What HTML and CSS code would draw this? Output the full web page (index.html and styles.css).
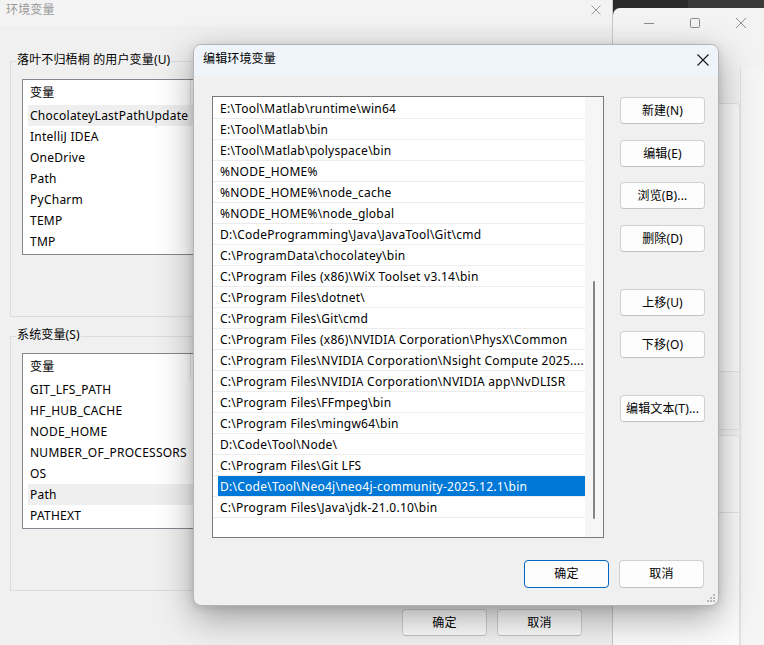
FILE: index.html
```html
<!DOCTYPE html>
<html lang="zh-CN">
<head>
<meta charset="utf-8">
<title>编辑环境变量</title>
<link rel="stylesheet" href="styles.css">
</head>
<body>
<div class="win-far">
  <div class="far-title">
    <div class="ctl"><svg width="12" height="12" viewBox="0 0 12 12"><path d="M1 6.5h10" stroke="#8a8a8a" stroke-width="1"/></svg></div>
    <div class="ctl"><svg width="12" height="12" viewBox="0 0 12 12"><rect x="1.5" y="1.5" width="9" height="9" rx="1" fill="none" stroke="#8a8a8a" stroke-width="1"/></svg></div>
    <div class="ctl"><svg width="12" height="12" viewBox="0 0 12 12"><path d="M1 1l10 10M11 1L1 11" stroke="#8a8a8a" stroke-width="1"/></svg></div>
  </div>
  <div class="far-body">
    <div class="far-cards">
      <div class="card card-a"><div class="card-sec card-sec-a1"></div><div class="card-sec card-sec-a2"></div></div>
      <div class="card card-b"><div class="card-sec card-sec-b1"></div></div>
    </div>
    <div class="far-side"></div>
  </div>
</div>

<div class="win-env">
  <div class="env-title">
    <span class="env-title-text">环境变量</span>
    <svg class="env-close" width="10" height="10" viewBox="0 0 10 10"><path d="M0.5 0.5l9 9M9.5 0.5l-9 9" stroke="#9a9a9a" stroke-width="1"/></svg>
  </div>
  <div class="group g1">
    <span class="group-label">落叶不归梧桐 的用户变量(U)</span>
    <div class="lv">
      <div class="lv-head"><div class="lv-col">变量</div><div class="lv-col2"></div></div>
      <div class="lv-row hl">ChocolateyLastPathUpdate</div>
      <div class="lv-row">IntelliJ IDEA</div>
      <div class="lv-row">OneDrive</div>
      <div class="lv-row">Path</div>
      <div class="lv-row">PyCharm</div>
      <div class="lv-row">TEMP</div>
      <div class="lv-row">TMP</div>
    </div>
  </div>
  <div class="group g2">
    <span class="group-label">系统变量(S)</span>
    <div class="lv">
      <div class="lv-head"><div class="lv-col">变量</div><div class="lv-col2"></div></div>
      <div class="lv-row">GIT_LFS_PATH</div>
      <div class="lv-row">HF_HUB_CACHE</div>
      <div class="lv-row">NODE_HOME</div>
      <div class="lv-row">NUMBER_OF_PROCESSORS</div>
      <div class="lv-row">OS</div>
      <div class="lv-row hl">Path</div>
      <div class="lv-row">PATHEXT</div>
    </div>
  </div>
  <div class="env-foot">
    <div class="btn">确定</div>
    <div class="btn">取消</div>
  </div>
</div>

<div class="dlg">
  <div class="dlg-title">
    <span>编辑环境变量</span>
    <svg class="dlg-close" width="12" height="12" viewBox="0 0 12 12"><path d="M0.5 0.5l11 11M11.5 0.5l-11 11" stroke="#1a1a1a" stroke-width="1.1"/></svg>
  </div>
  <div class="dlg-main">
    <div class="pl">
      <div class="pl-rows">
        <div class="pl-row"><span class="cell">E:\Tool\Matlab\runtime\win64</span></div>
        <div class="pl-row"><span class="cell">E:\Tool\Matlab\bin</span></div>
        <div class="pl-row"><span class="cell">E:\Tool\Matlab\polyspace\bin</span></div>
        <div class="pl-row"><span class="cell">%NODE_HOME%</span></div>
        <div class="pl-row"><span class="cell">%NODE_HOME%\node_cache</span></div>
        <div class="pl-row"><span class="cell">%NODE_HOME%\node_global</span></div>
        <div class="pl-row"><span class="cell">D:\CodeProgramming\Java\JavaTool\Git\cmd</span></div>
        <div class="pl-row"><span class="cell">C:\ProgramData\chocolatey\bin</span></div>
        <div class="pl-row"><span class="cell">C:\Program Files (x86)\WiX Toolset v3.14\bin</span></div>
        <div class="pl-row"><span class="cell">C:\Program Files\dotnet\</span></div>
        <div class="pl-row"><span class="cell">C:\Program Files\Git\cmd</span></div>
        <div class="pl-row"><span class="cell">C:\Program Files (x86)\NVIDIA Corporation\PhysX\Common</span></div>
        <div class="pl-row"><span class="cell">C:\Program Files\NVIDIA Corporation\Nsight Compute 2025....</span></div>
        <div class="pl-row"><span class="cell">C:\Program Files\NVIDIA Corporation\NVIDIA app\NvDLISR</span></div>
        <div class="pl-row"><span class="cell">C:\Program Files\FFmpeg\bin</span></div>
        <div class="pl-row"><span class="cell">C:\Program Files\mingw64\bin</span></div>
        <div class="pl-row"><span class="cell">D:\Code\Tool\Node\</span></div>
        <div class="pl-row"><span class="cell">C:\Program Files\Git LFS</span></div>
        <div class="pl-row"><span class="cell sel">D:\Code\Tool\Neo4j\neo4j-community-2025.12.1\bin</span></div>
        <div class="pl-row"><span class="cell">C:\Program Files\Java\jdk-21.0.10\bin</span></div>
      </div>
      <div class="pl-scroll"><div class="thumb"></div></div>
    </div>
    <div class="btns">
      <div class="btn">新建(N)</div>
      <div class="btn mt1">编辑(E)</div>
      <div class="btn">浏览(B)...</div>
      <div class="btn mt1">删除(D)</div>
      <div class="btn mt-lg">上移(U)</div>
      <div class="btn">下移(O)</div>
      <div class="btn mt-lg">编辑文本(T)...</div>
    </div>
  </div>
  <div class="dlg-foot">
    <div class="btn btn-tall primary">确定</div>
    <div class="btn btn-tall">取消</div>
  </div>
  <svg class="grip" width="8" height="8" viewBox="0 0 8 8">
    <rect x="6" y="0" width="2" height="2" fill="#b8b8b8"/>
    <rect x="3" y="3" width="2" height="2" fill="#b8b8b8"/>
    <rect x="6" y="3" width="2" height="2" fill="#b8b8b8"/>
    <rect x="0" y="6" width="2" height="2" fill="#b8b8b8"/>
    <rect x="3" y="6" width="2" height="2" fill="#b8b8b8"/>
    <rect x="6" y="6" width="2" height="2" fill="#b8b8b8"/>
  </svg>
</div>
</body>
</html>
```

FILE: styles.css
```css
* { box-sizing: border-box; }
html, body { margin: 0; padding: 0; }
body {
  width: 764px;
  height: 645px;
  overflow: hidden;
  position: relative;
  background: linear-gradient(to right, #2b2b2b 688px, #3a3a3a 688px);
  font-family: "Noto Sans", "Noto Sans CJK SC", sans-serif;
  font-size: 12px;
  color: #000;
  letter-spacing: 0.15px;
}

/* far right background window */
.win-far {
  position: absolute;
  left: 613px;
  top: 8px;
  right: 0;
  bottom: 0;
  background: #f3f3f3;
  border-top-left-radius: 7px;
  display: flex;
  flex-direction: column;
}
.far-title {
  display: flex;
  justify-content: flex-end;
  height: 30px;
}
.ctl {
  width: 46px;
  height: 30px;
  display: flex;
  align-items: center;
  justify-content: center;
}
.far-body {
  flex: 1;
  display: flex;
}
.far-cards {
  flex: 1;
  padding: 65px 0 0 0;
  display: flex;
  flex-direction: column;
  gap: 5px;
}
.card {
  background: #fbfbfb;
  border: 1px solid #e3e3e3;
  border-left: none;
  border-radius: 0 4px 4px 0;
  display: flex;
  flex-direction: column;
}
.card-a { height: 327px; }
.card-sec-a1 { height: 268px; border-bottom: 1px solid #e3e3e3; }
.card-sec-a2 { flex: 1; background: #f6f6f6; border-radius: 0 0 4px 0; }
.card-b { flex: 1; border-bottom: none; border-radius: 0 4px 0 0; }
.card-sec-b1 { height: 77px; border-bottom: 1px solid #e3e3e3; }
.far-side {
  width: 24px;
  margin-top: 30px;
  border-left: 1px solid #e1e1e1;
  background: #f5f5f5;
}

/* environment variables window */
.win-env {
  position: absolute;
  left: 0;
  top: 0;
  width: 613px;
  height: 645px;
  background: #f0f0f0;
  border-right: 1px solid #c9c9c9;
}
.env-title {
  height: 26px;
  display: flex;
  align-items: flex-start;
  justify-content: space-between;
  padding: 2px 11px 0 6px;
  background: #f3f3f3;
}
.env-title-text {
  color: #9a9a9a;
  line-height: 16px;
}
.env-close { margin-top: 3px; }
.group {
  position: relative;
  margin: 0 10px 0 10px;
  border: 1px solid #dcdcdc;
  padding: 17px 0 0 11px;
}
.g1 { margin-top: 35px; height: 256px; }
.g2 { margin-top: 19px; height: 255px; padding-top: 16px; }
.group-label {
  position: absolute;
  top: -10px;
  left: 5px;
  padding: 0 1px;
  background: #f0f0f0;
  line-height: 16px;
  white-space: nowrap;
}
.lv {
  width: 570px;
  height: 176px;
  background: #fff;
  border: 1px solid #828790;
}
.lv-head {
  height: 25px;
  display: flex;
}
.lv-col {
  width: 168px;
  padding-left: 7px;
  line-height: 25px;
  border-right: 1px solid #e5e5e5;
}
.lv-col2 { flex: 1; }
.lv-row {
  height: 21px;
  line-height: 21px;
  margin-left: 5px;
  padding-left: 2px;
  white-space: nowrap;
  letter-spacing: 0.25px;
}
.lv-row.hl { background: #efefef; }
.env-foot {
  margin-top: 18px;
  display: flex;
  justify-content: flex-end;
  gap: 10px;
  padding-right: 30px;
}

/* buttons */
.btn {
  width: 85px;
  height: 27px;
  border: 1px solid #d0d0d0;
  border-bottom-color: #c2c2c2;
  border-radius: 4px;
  background: #fdfdfd;
  display: flex;
  align-items: center;
  justify-content: center;
  white-space: nowrap;
  line-height: 16px;
}
.btn-tall { height: 28px; }
.btn.primary { border: 1px solid #0067c0; }

/* edit dialog */
.dlg {
  position: absolute;
  left: 193px;
  top: 44px;
  width: 526px;
  height: 562px;
  background: #f0f0f0;
  border: 1px solid #b4b4b4;
  border-radius: 8px;
  overflow: hidden;
  box-shadow: 0 12px 36px rgba(0, 0, 0, 0.34), 0 2px 8px rgba(0, 0, 0, 0.12);
}
.dlg-title {
  height: 31px;
  background: #eef4f9;
  display: flex;
  align-items: flex-start;
  justify-content: space-between;
  padding: 6px 9px 0 9px;
  line-height: 16px;
}
.dlg-close { margin-top: 3px; }
.dlg-main {
  display: flex;
  padding: 20px 0 0 18px;
}
.pl {
  width: 392px;
  height: 442px;
  border: 1px solid #7a7a7a;
  background: #fff;
  display: flex;
}
.pl-rows { flex: 1; min-width: 0; padding-top: 1px; }
.pl-row {
  height: 21px;
  border-bottom: 1px solid #ececec;
}
.cell {
  display: block;
  margin-left: 5px;
  padding-left: 2px;
  height: 20px;
  line-height: 22px;
  white-space: nowrap;
  overflow: hidden;
  letter-spacing: 0.25px;
}
.cell.sel {
  background: #0078d7;
  color: #fff;
}
.pl-scroll {
  width: 18px;
  background: #f6f6f6;
  padding: 184px 0 0 8px;
}
.thumb {
  width: 2px;
  height: 238px;
  border-radius: 1px;
  background: #858585;
}
.btns {
  margin: 1px 0 0 16px;
  display: flex;
  flex-direction: column;
  gap: 15px;
}
.btns .mt1 { margin-top: 1px; }
.btns .mt-lg { margin-top: 22px; }
.dlg-foot {
  margin-top: 22px;
  display: flex;
  justify-content: flex-end;
  gap: 10px;
  padding-right: 14px;
}
.grip {
  position: absolute;
  right: 3px;
  bottom: 3px;
}
```
